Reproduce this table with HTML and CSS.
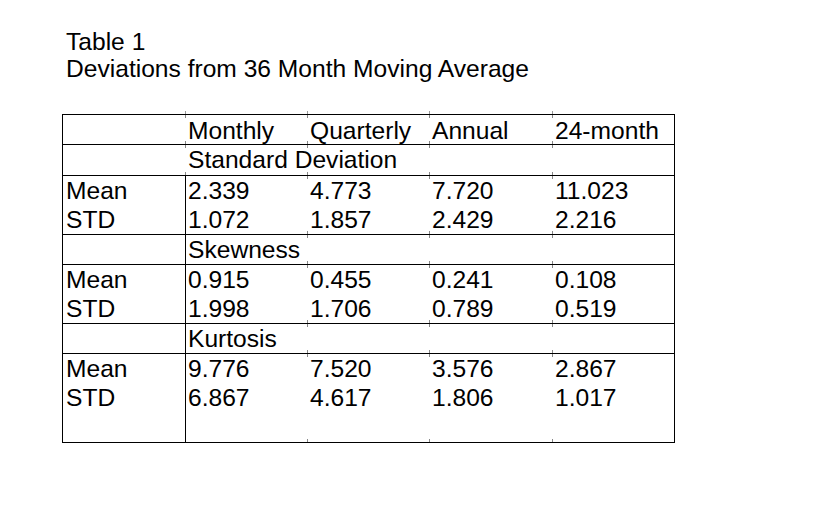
FILE: index.html
```html
<!DOCTYPE html>
<html lang="en">
<head>
<meta charset="utf-8">
<title>Table 1</title>
<link rel="stylesheet" href="styles.css">
</head>
<body>
<div class="page">
  <div class="title">
    <div>Table 1</div>
    <div>Deviations from 36 Month Moving Average</div>
  </div>
  <div class="tbl">
    <div class="blk head">
      <div class="cell"></div>
      <div class="cell">Monthly</div>
      <div class="cell">Quarterly</div>
      <div class="cell">Annual</div>
      <div class="cell">24-month</div>
    </div>
    <div class="blk label first">
      <div class="cell"></div>
      <div class="cell span">Standard Deviation</div>
    </div>
    <div class="blk data">
      <div class="cell lab"><div>Mean</div><div>STD</div></div>
      <div class="cell"><div>2.339</div><div>1.072</div></div>
      <div class="cell"><div>4.773</div><div>1.857</div></div>
      <div class="cell"><div>7.720</div><div>2.429</div></div>
      <div class="cell"><div>11.023</div><div>2.216</div></div>
    </div>
    <div class="blk label">
      <div class="cell lab"></div>
      <div class="cell span">Skewness</div>
    </div>
    <div class="blk data">
      <div class="cell lab"><div>Mean</div><div>STD</div></div>
      <div class="cell"><div>0.915</div><div>1.998</div></div>
      <div class="cell"><div>0.455</div><div>1.706</div></div>
      <div class="cell"><div>0.241</div><div>0.789</div></div>
      <div class="cell"><div>0.108</div><div>0.519</div></div>
    </div>
    <div class="blk label">
      <div class="cell lab"></div>
      <div class="cell span">Kurtosis</div>
    </div>
    <div class="blk data last">
      <div class="cell lab"><div>Mean</div><div>STD</div></div>
      <div class="cell"><div>9.776</div><div>6.867</div></div>
      <div class="cell"><div>7.520</div><div>4.617</div></div>
      <div class="cell"><div>3.576</div><div>1.806</div></div>
      <div class="cell"><div>2.867</div><div>1.017</div></div>
    </div>
  </div>
</div>
</body>
</html>
```
FILE: styles.css
```css
html, body {
  margin: 0;
  padding: 0;
  background: #fff;
}
body {
  font-family: "Liberation Sans", Arial, sans-serif;
  color: #000;
  font-size: 24.6px;
}
.page {
  padding-top: 28px;
}
.title {
  margin-left: 66px;
  line-height: 27px;
}
.tbl {
  position: relative;
  margin-top: 32px;
  margin-left: 62px;
  width: 611px;
  border: 1px solid #000;
}
.tbl::before,
.tbl::after {
  content: "";
  position: absolute;
  left: 122px;
  width: 1px;
  height: 3px;
  background: #999;
  box-shadow: 122px 0 #999, 244px 0 #999, 367px 0 #999;
}
.tbl::before { top: -4px; }
.tbl::after { bottom: -4px; }
.blk {
  display: grid;
  grid-template-columns: 123px 122px 122px 123px 121px;
  border-bottom: 1px solid #000;
  background:
    linear-gradient(#888, #888) 122px 0 / 1px 3px no-repeat,
    linear-gradient(#888, #888) 244px 0 / 1px 3px no-repeat,
    linear-gradient(#888, #888) 366px 0 / 1px 3px no-repeat,
    linear-gradient(#888, #888) 489px 0 / 1px 3px no-repeat,
    linear-gradient(#888, #888) 122px 100% / 1px 3px no-repeat,
    linear-gradient(#888, #888) 244px 100% / 1px 3px no-repeat,
    linear-gradient(#888, #888) 366px 100% / 1px 3px no-repeat,
    linear-gradient(#888, #888) 489px 100% / 1px 3px no-repeat;
}
.blk.last {
  border-bottom: none;
}
.cell {
  box-sizing: border-box;
  padding-left: 2px;
  line-height: 29px;
  white-space: nowrap;
}
.cell.lab {
  border-right: 1px solid #000;
  padding-left: 3px;
}
.cell.span {
  grid-column: 2 / 6;
}
.head {
  height: 29px;
}
.head .cell {
  padding-top: 1px;
}
.label {
  height: 29px;
}
.label.first {
  height: 30px;
}
.label.first .cell {
  line-height: 30px;
}
.data {
  height: 58px;
}
.data.last {
  height: 88px;
}
```
